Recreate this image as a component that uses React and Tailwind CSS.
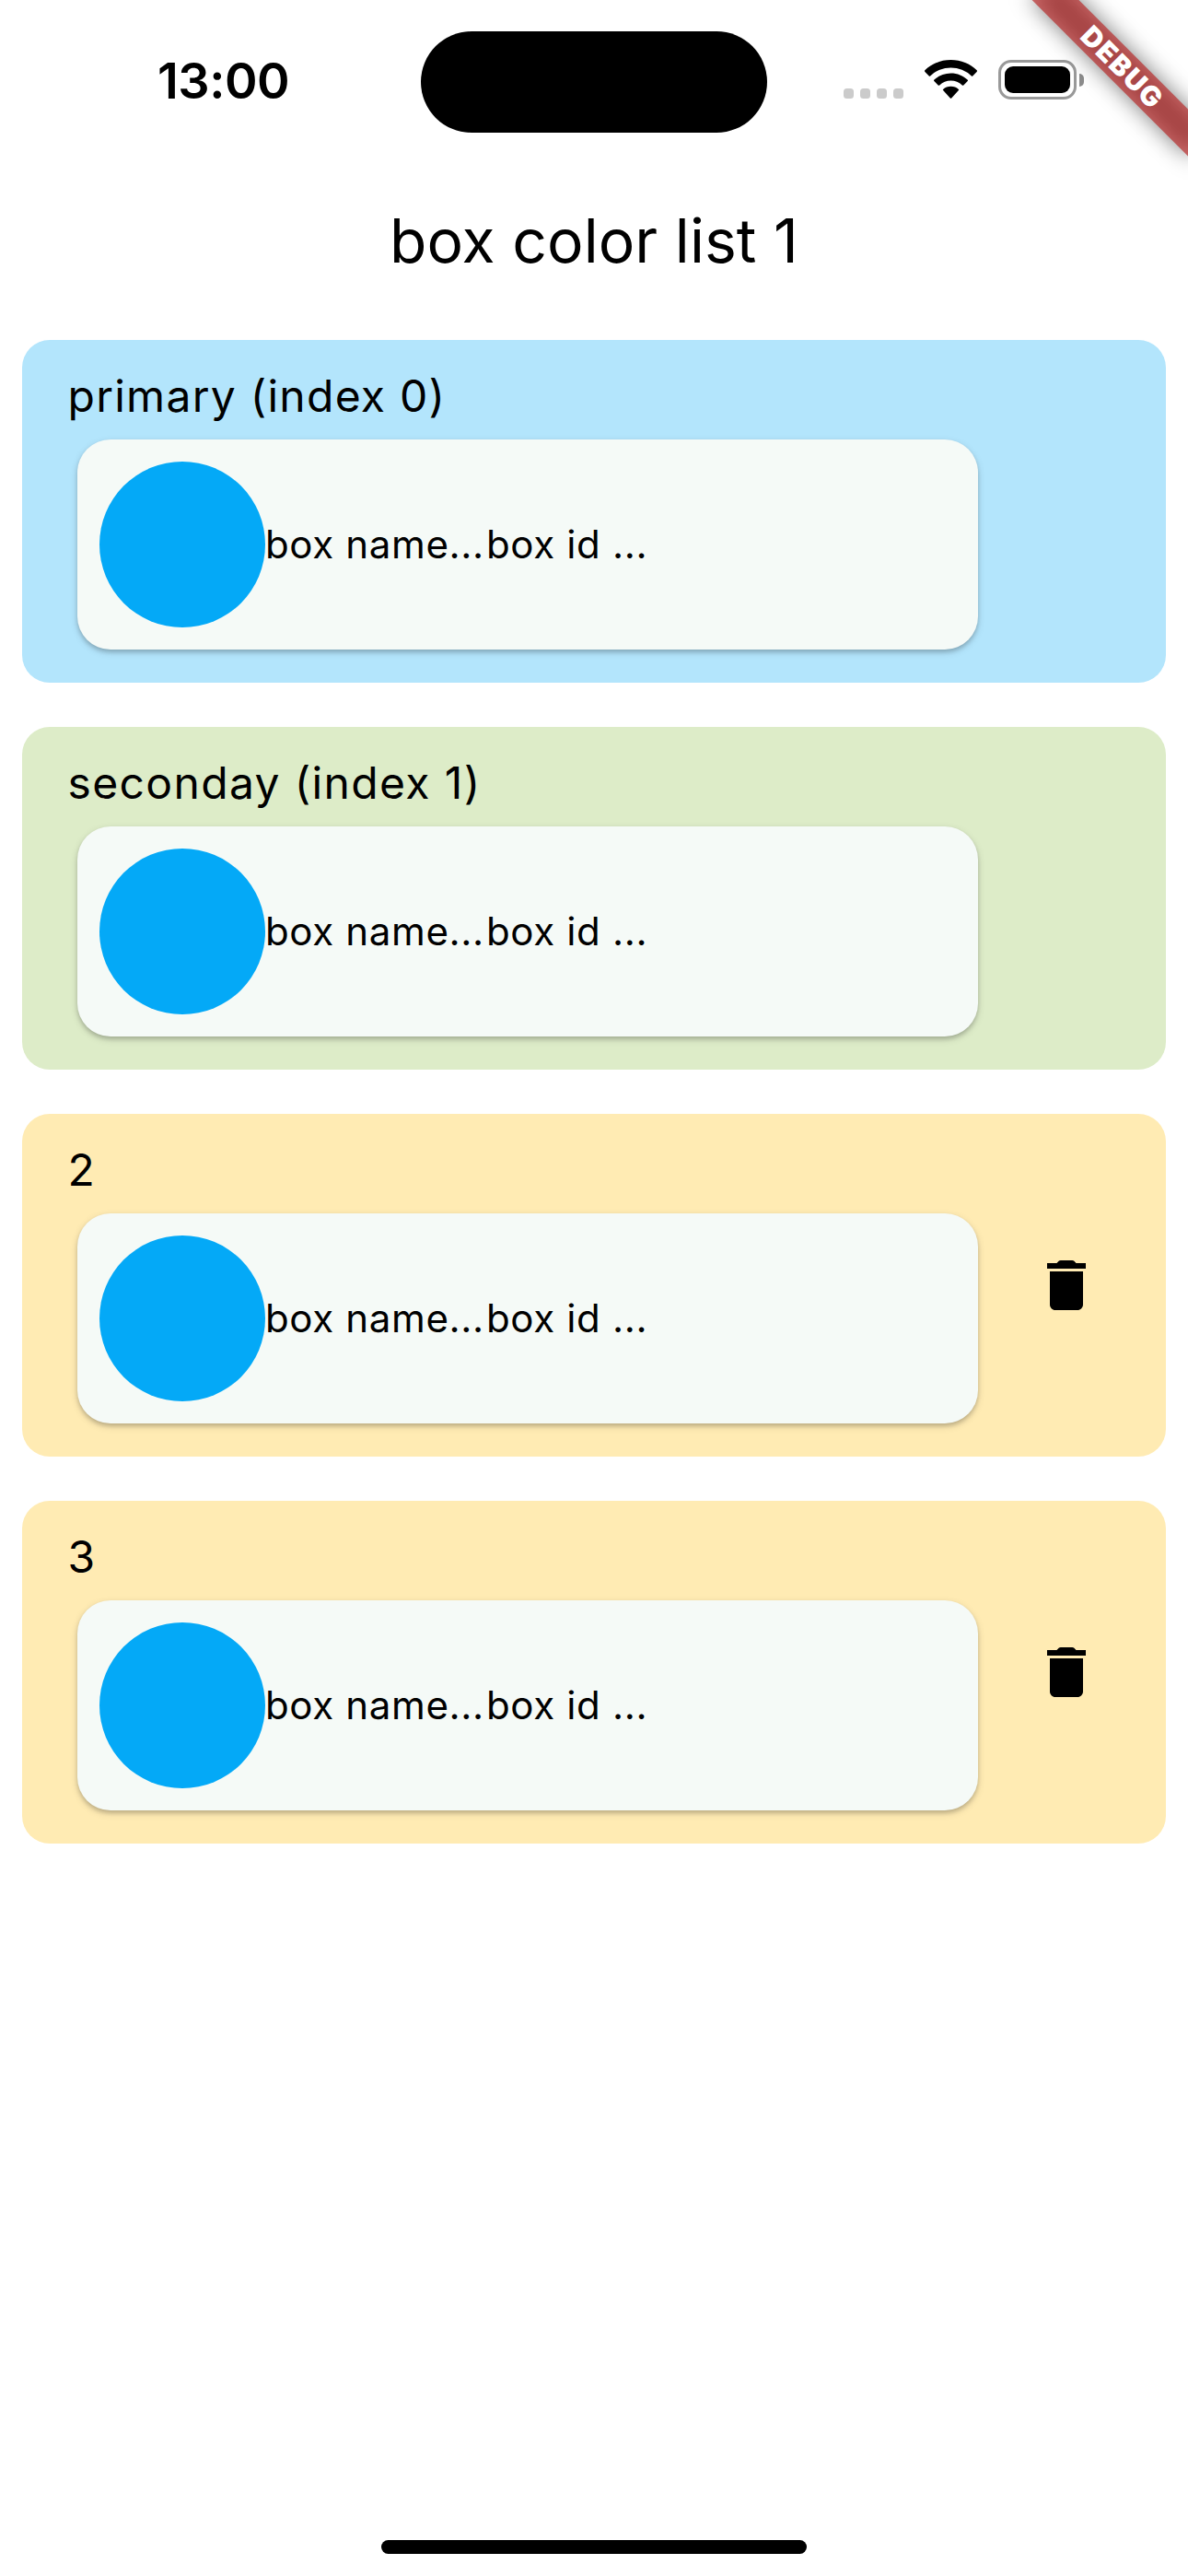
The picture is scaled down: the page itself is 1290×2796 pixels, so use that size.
const boxes = [
  { title: "primary (index 0)", color: "bg-[#b3e5fc]", removable: false, spacing: "tracking-[1.26px]" },
  { title: "seconday (index 1)", color: "bg-[#ddecc8]", removable: false, spacing: "tracking-[1.36px]" },
  { title: "2", color: "bg-[#ffebb3]", removable: true, spacing: "tracking-[1.3px]" },
  { title: "3", color: "bg-[#ffebb3]", removable: true, spacing: "tracking-[1.3px]" },
];

function TrashIcon() {
  return (
    <svg viewBox="0 0 24 24" className="size-[72px]" fill="#000">
      <path d="M6 19c0 1.1.9 2 2 2h8c1.1 0 2-.9 2-2V7H6v12zM19 4h-3.500l-.71-.71c-.18-.18-.44-.29-.7-.29H9.910c-.26 0-.52.11-.7.29L8.500 4H5v2h14V4z" />
    </svg>
  );
}

function StatusBar() {
  return (
    <header className="flex h-[177px] pt-[34px]">
      <div className="w-[457px] pl-[171px] pt-[27px] text-[54px] leading-[54px] font-semibold">
        <span className="tracking-[-0.5px]">13:00</span>
      </div>
      <div className="h-[110px] w-[376px] rounded-full bg-black" />
      <div className="ml-[83px] mt-[31px] flex h-[43px] items-start">
        <div className="mt-[31px] flex gap-[7px]">
          {[0, 1, 2, 3].map((i) => (
            <span key={i} className="size-[11px] rounded-[3.5px] bg-[#cbcbcb]" />
          ))}
        </div>
        <svg viewBox="0 0 57 42" className="ml-[23px] h-[42px] w-[57px]" fill="#000">
          <path d="M28.500 0C39.500 0 49.500 4.200 56.700 11.300Q57.400 12.200 56.600 13L52.200 17.500Q51.500 18 50.900 17.400A32.500 32.500 0 0 0 6.100 17.400Q5.500 18 4.800 17.500L.4 13Q-.4 12.200.3 11.300C7.500 4.200 17.500 0 28.500 0Z" />
          <path d="M28.500 14.400C35.500 14.400 42 17.100 46.800 21.700Q47.400 22.400 46.700 23L42.300 27.400Q41.500 28.100 40.800 27.400A18.200 18.200 0 0 0 16.200 27.400Q15.500 28.100 14.700 27.400L10.300 23Q9.600 22.400 10.200 21.700C15 17.100 21.500 14.400 28.500 14.400Z" />
          <path d="M28.500 28.700C31.700 28.700 34.700 29.900 36.900 31.900Q37.500 32.500 36.900 33.100L29.200 41.500Q28.500 42.100 27.800 41.500L20.100 33.100Q19.500 32.500 20.100 31.900C22.300 29.900 25.300 28.700 28.500 28.700Z" />
        </svg>
        <div className="ml-[23px] flex items-center">
          <div className="h-[43px] w-[85px] rounded-[14px] border-3 border-[#999] p-[4px]">
            <div className="h-[29px] w-[71px] rounded-[9px] bg-black" />
          </div>
          <div className="ml-[3px] h-[14px] w-[5px] rounded-r-full bg-[#8c8c8c]" />
        </div>
      </div>
    </header>
  );
}

function DebugBanner() {
  return (
    <div className="pointer-events-none absolute right-0 top-0 size-[260px] overflow-hidden">
      <div className="absolute left-[68px] top-[54px] h-[36px] w-[240px] rotate-45">
        <div className="absolute inset-0 bg-black/50 blur-[12px]" />
        <div className="absolute inset-0 flex items-center justify-center bg-[#b71c1c]/63 pl-[3px] text-[30px] leading-[36px] font-black tracking-[1.6px] text-white">
          DEBUG
        </div>
      </div>
    </div>
  );
}

function BoxItem({ title, color, removable, spacing }) {
  return (
    <li className={`flex h-[372px] items-center justify-between rounded-[30px] pr-[36px] ${color}`}>
      <div className="flex h-full flex-col pl-[48px] pt-[24px]">
        <div className={`h-[72px] whitespace-nowrap pl-[1.5px] pt-px text-[48px] leading-[72px] ${spacing}`}>{title}</div>
        <div className="ml-[12px] mt-[12px] flex h-[228px] w-[978px] items-center rounded-[36px] bg-[#f5faf7] p-[24px] shadow-[0_3px_9px_rgba(0,0,0,0.14),0_3px_4px_rgba(0,0,0,0.16)]">
          <div className="size-[180px] shrink-0 rounded-full bg-[#04a9f7]" />
          <div className="flex whitespace-nowrap text-[42px] leading-[60px]">
            <span className="w-[240px] tracking-[0.65px]">box name...</span>
            <span className="tracking-[0.65px]">box id ...</span>
          </div>
        </div>
      </div>
      {removable && (
        <button className="flex size-[144px] items-center justify-center" aria-label="Delete">
          <TrashIcon />
        </button>
      )}
    </li>
  );
}

export default function App() {
  return (
    <div className="relative flex h-[2796px] w-[1290px] flex-col overflow-hidden bg-white font-['Inter',sans-serif] text-black">
      <StatusBar />
      <h1 className="flex h-[168px] items-center justify-center text-[66px] leading-[84px] tracking-[0.05px]">
        box color list 1
      </h1>
      <ul className="flex flex-col gap-[48px] px-[24px] pt-[24px]">
        {boxes.map((box) => (
          <BoxItem key={box.title} {...box} />
        ))}
      </ul>
      <div className="mx-auto mb-[24px] mt-auto h-[15px] w-[462px] rounded-full bg-black" />
      <DebugBanner />
    </div>
  );
}
